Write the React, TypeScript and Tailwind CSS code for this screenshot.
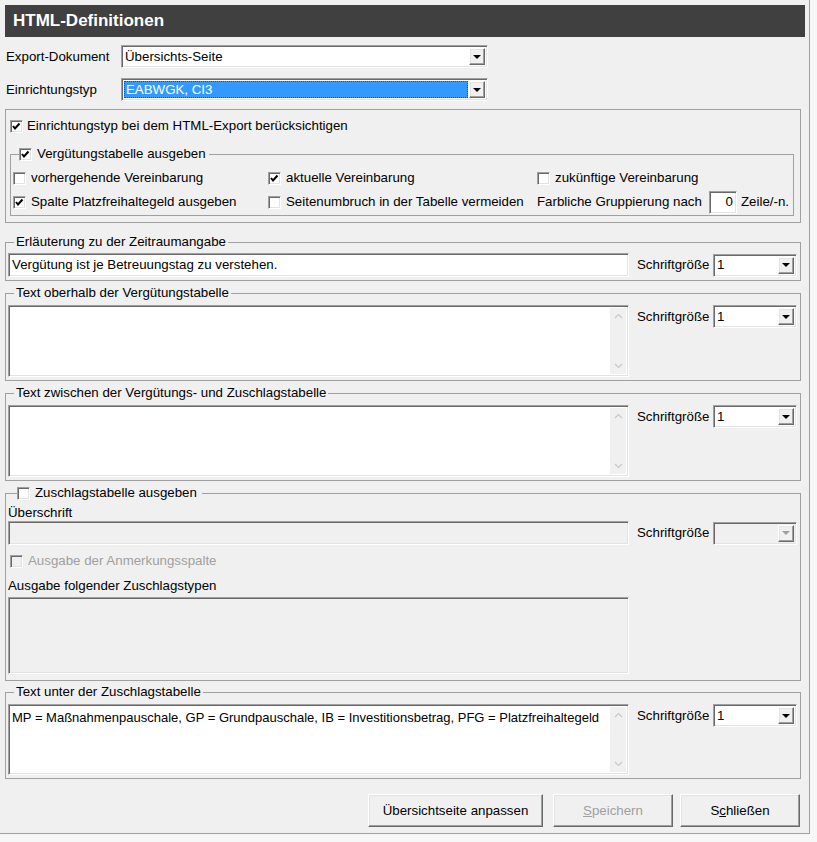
import type { ReactNode } from 'react';

const sunken =
  'border border-t-[#a0a0a0] border-l-[#a0a0a0] border-b-white border-r-white shadow-[inset_1px_1px_0_#696969,inset_-1px_-1px_0_#e3e3e3]';
const raised =
  'border border-t-white border-l-white border-b-[#696969] border-r-[#696969] shadow-[inset_-1px_-1px_0_#a0a0a0,inset_1px_1px_0_#e3e3e3]';

function Check({ checked = false, disabled = false }: { checked?: boolean; disabled?: boolean }) {
  return (
    <span
      className={`w-[13px] h-[13px] shrink-0 flex items-center justify-center ${sunken} ${
        disabled ? 'bg-[#f0f0f0]' : 'bg-white'
      }`}
    >
      {checked && (
        <svg width="9" height="9" viewBox="0 0 9 9">
          <polyline points="1,4 3,6.5 7.5,1.5" fill="none" stroke="#000" strokeWidth="2" />
        </svg>
      )}
    </span>
  );
}

function CheckLabel({
  checked,
  disabled,
  children,
  gap = 'gap-[5px]',
}: {
  checked?: boolean;
  disabled?: boolean;
  children: ReactNode;
  gap?: string;
}) {
  return (
    <span className={`flex items-center ${gap} ${disabled ? 'text-[#a0a0a0]' : ''}`}>
      <Check checked={checked} disabled={disabled} />
      <span>{children}</span>
    </span>
  );
}

function DropButton({ disabled = false }: { disabled?: boolean }) {
  return (
    <span className={`w-[16px] h-full shrink-0 bg-[#f0f0f0] flex items-center justify-center ${raised}`}>
      <span
        className={`w-0 h-0 border-l-[4px] border-r-[4px] border-t-[4px] border-l-transparent border-r-transparent ${
          disabled ? 'border-t-[#a0a0a0]' : 'border-t-black'
        }`}
      />
    </span>
  );
}

function Select({
  value = '',
  width,
  disabled = false,
  focused = false,
}: {
  value?: string;
  width: string;
  disabled?: boolean;
  focused?: boolean;
}) {
  return (
    <div className={`${width} h-[23px] flex p-[2px] ${sunken} ${disabled ? 'bg-[#f0f0f0]' : 'bg-white'}`}>
      <div className="flex-1 min-w-0 flex items-center pr-[1px]">
        {focused ? (
          <span className="w-full h-full flex items-center bg-[#3399ff] text-white pl-[1px] border border-dotted border-[#7a3b00]">
            {value}
          </span>
        ) : (
          <span className="pl-[1px]">{value}</span>
        )}
      </div>
      <DropButton disabled={disabled} />
    </div>
  );
}

function TextArea({ text = '', height }: { text?: string; height: string }) {
  return (
    <div className={`w-[621px] ${height} flex bg-white p-[2px] ${sunken}`}>
      <div className="flex-1 min-w-0 whitespace-nowrap pl-[1px] pt-[3px] text-[13px] leading-[16px]">{text}</div>
      <div className="w-[16px] h-full shrink-0 bg-[#f0f0f0] flex flex-col justify-between items-center py-[5px]">
        <svg width="9" height="6" viewBox="0 0 9 6">
          <polyline points="1,5 4.5,1.5 8,5" fill="none" stroke="#c8c8c8" strokeWidth="1.2" />
        </svg>
        <svg width="9" height="6" viewBox="0 0 9 6">
          <polyline points="1,1 4.5,4.5 8,1" fill="none" stroke="#c8c8c8" strokeWidth="1.2" />
        </svg>
      </div>
    </div>
  );
}

function FontSize({ disabled = false }: { disabled?: boolean }) {
  return (
    <div className="flex items-center ml-[8px]">
      <span className="w-[76px]">Schriftgröße</span>
      <Select value={disabled ? '' : '1'} width="w-[84px]" disabled={disabled} />
    </div>
  );
}

function Group({ legend, className, children }: { legend: ReactNode; className: string; children: ReactNode }) {
  return (
    <fieldset className={`w-[796px] border border-[#a0a0a0] ${className}`}>
      <legend className="ml-[6px] px-[2px] leading-[16px]">{legend}</legend>
      {children}
    </fieldset>
  );
}

function Button({ label, width, disabled = false }: { label: ReactNode; width: string; disabled?: boolean }) {
  return (
    <button
      className={`${width} h-[33px] bg-[#f0f0f0] flex items-center justify-center ${raised} ${
        disabled ? 'text-[#a0a0a0]' : 'text-black'
      }`}
    >
      {label}
    </button>
  );
}

export default function App() {
  return (
    <div className="w-[817px] h-[842px] bg-[#f7f7f7] text-[13.3px] leading-[16px] text-black font-['Liberation_Sans',Arial,sans-serif]">
      <div className="w-[810px] h-[834px] bg-[#f0f0f0] border-r border-b border-[#a0a0a0] pl-[5px] pt-[5px]">
        <div className="w-[800px] h-[32px] bg-[#404040] text-white font-bold text-[17px] pl-[8px] flex items-center">
          HTML-Definitionen
        </div>

        <div className="mt-[8px] flex items-center">
          <span className="w-[116px] pl-[1px]">Export-Dokument</span>
          <Select value="Übersichts-Seite" width="w-[367px]" />
        </div>
        <div className="mt-[10px] flex items-center">
          <span className="w-[116px] pl-[1px]">Einrichtungstyp</span>
          <Select value="EABWGK, CI3" width="w-[367px]" focused />
        </div>

        <div className="mt-[8px] w-[796px] border border-[#a0a0a0] pl-[4px] pt-[8px] pb-[6px]">
          <CheckLabel checked gap="gap-[4px]">
            Einrichtungstyp bei dem HTML-Export berücksichtigen
          </CheckLabel>
          <fieldset className="mt-[12px] w-[784px] border border-[#a0a0a0] pl-[2px] pt-[4px] pb-[1px]">
            <legend className="ml-[6px] pr-[3px] leading-[16px]">
              <CheckLabel checked>Vergütungstabelle ausgeben</CheckLabel>
            </legend>
            <div className="flex h-[24px] items-center">
              <div className="w-[255px]">
                <CheckLabel>vorhergehende Vereinbarung</CheckLabel>
              </div>
              <div className="w-[269px]">
                <CheckLabel checked>aktuelle Vereinbarung</CheckLabel>
              </div>
              <CheckLabel>zukünftige Vereinbarung</CheckLabel>
            </div>
            <div className="flex h-[24px] items-center">
              <div className="w-[255px]">
                <CheckLabel checked>Spalte Platzfreihaltegeld ausgeben</CheckLabel>
              </div>
              <div className="w-[269px]">
                <CheckLabel>Seitenumbruch in der Tabelle vermeiden</CheckLabel>
              </div>
              <span className="w-[172px]">Farbliche Gruppierung nach</span>
              <span className={`w-[28px] h-[23px] bg-white flex items-center justify-end pr-[3px] ${sunken}`}>0</span>
              <span className="ml-[4px]">Zeile/-n.</span>
            </div>
          </fieldset>
        </div>

        <Group legend="Erläuterung zu der Zeitraumangabe" className="mt-[11px] pl-[2px] pt-[3px] pb-[3px]">
          <div className="flex items-center">
            <div className={`w-[621px] h-[24px] bg-white flex items-center pl-[3px] ${sunken}`}>
              Vergütung ist je Betreuungstag zu verstehen.
            </div>
            <FontSize />
          </div>
        </Group>

        <Group legend="Text oberhalb der Vergütungstabelle" className="mt-[4px] pl-[2px] pt-[4px] pb-[3px]">
          <div className="flex items-start">
            <TextArea height="h-[72px]" />
            <FontSize />
          </div>
        </Group>

        <Group
          legend="Text zwischen der Vergütungs- und Zuschlagstabelle"
          className="mt-[4px] pl-[2px] pt-[4px] pb-[3px]"
        >
          <div className="flex items-start">
            <TextArea height="h-[72px]" />
            <FontSize />
          </div>
        </Group>

        <fieldset className="mt-[4px] w-[796px] border border-[#a0a0a0] pl-[2px] pt-[4px] pb-[6px]">
          <legend className="ml-[9px] pr-[5px] leading-[16px]">
            <CheckLabel>Zuschlagstabelle ausgeben</CheckLabel>
          </legend>
          <div>Überschrift</div>
          <div className="flex items-center">
            <div className={`w-[621px] h-[24px] bg-[#f0f0f0] ${sunken}`} />
            <FontSize disabled />
          </div>
          <div className="mt-[8px] pl-[2px]">
            <CheckLabel disabled>Ausgabe der Anmerkungsspalte</CheckLabel>
          </div>
          <div className="mt-[9px]">Ausgabe folgender Zuschlagstypen</div>
          <div className={`mt-[3px] w-[621px] h-[77px] bg-[#f0f0f0] ${sunken}`} />
        </fieldset>

        <Group legend="Text unter der Zuschlagstabelle" className="mt-[3px] pl-[2px] pt-[4px] pb-[3px]">
          <div className="flex items-start">
            <TextArea
              height="h-[71px]"
              text="MP = Maßnahmenpauschale, GP = Grundpauschale, IB = Investitionsbetrag, PFG = Platzfreihaltegeld"
            />
            <FontSize />
          </div>
        </Group>

        <div className="mt-[15px] w-[796px] flex justify-end pr-[1px]">
          <Button label="Übersichtseite anpassen" width="w-[175px]" />
          <div className="ml-[10px]">
            <Button
              label={
                <span>
                  <span className="underline">S</span>peichern
                </span>
              }
              width="w-[120px]"
              disabled
            />
          </div>
          <div className="ml-[7px]">
            <Button
              label={
                <span>
                  S<span className="underline">c</span>hließen
                </span>
              }
              width="w-[120px]"
            />
          </div>
        </div>
      </div>
    </div>
  );
}
